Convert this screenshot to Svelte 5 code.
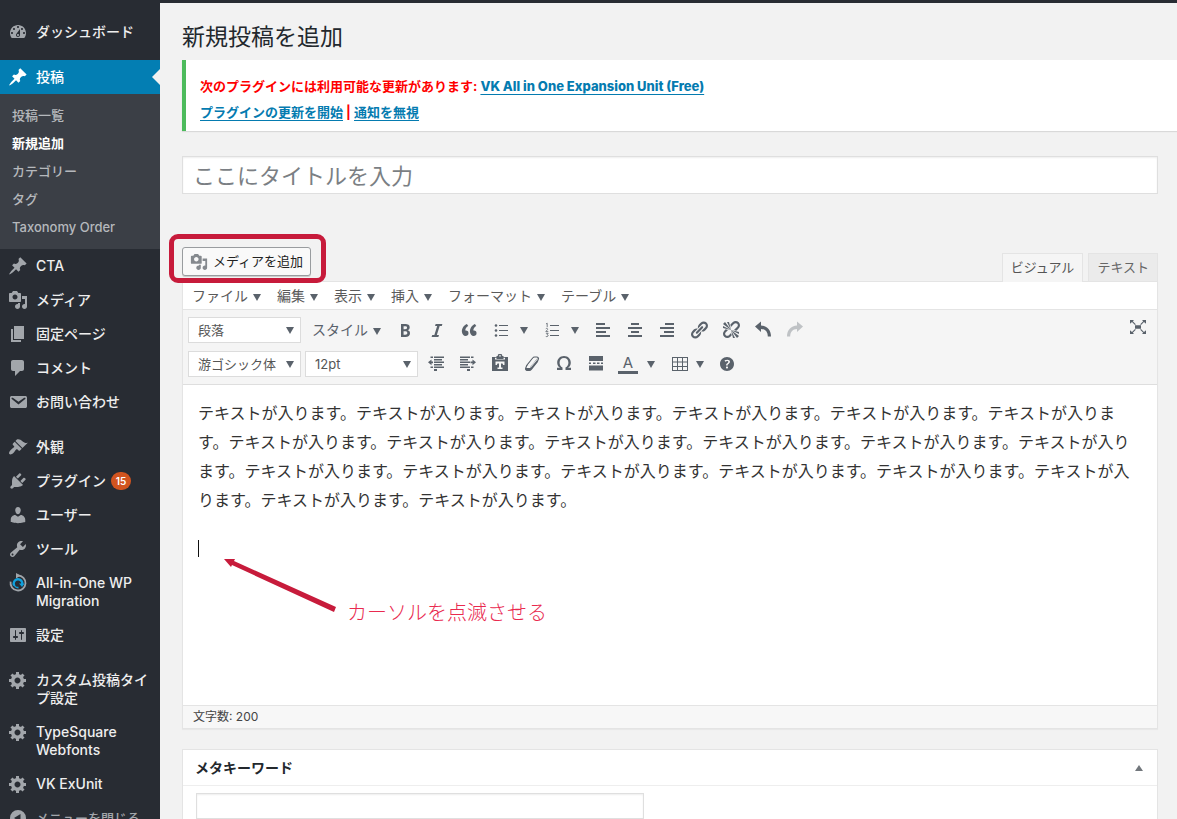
<script>
  const pin = 'M10.44 3.02l1.82-1.82 6.36 6.35-1.83 1.82c-1.05-.68-2.48-.57-3.41.36l-.75.75c-.92.93-1.04 2.35-.35 3.41l-1.83 1.82-2.41-2.41-2.8 2.79c-.42.42-3.38 2.71-3.8 2.29s1.86-3.39 2.28-3.81l2.79-2.79L4.1 9.36l1.83-1.82c1.05.69 2.48.57 3.4-.36l.75-.75c.93-.92 1.05-2.35.36-3.41z';
  const media = 'M13 11V4c0-.55-.45-1-1-1h-1.67L9 1H5L3.67 3H2c-.55 0-1 .45-1 1v7c0 .55.45 1 1 1h10c.55 0 1-.45 1-1zM7 4.5c1.38 0 2.5 1.12 2.5 2.5S8.38 9.5 7 9.5 4.5 8.38 4.5 7 5.62 4.5 7 4.5zM14 6h5v10.5c0 1.38-1.12 2.5-2.5 2.5S14 17.88 14 16.5s1.12-2.5 2.5-2.5c.17 0 .34.02.5.05V9h-3V6zm-4 8.05V13h2v3.5c0 1.38-1.12 2.5-2.5 2.5S7 17.88 7 16.5 8.12 14 9.5 14c.17 0 .34.02.5.05z';
  const gear = 'M18 12h-2.18c-.17.7-.44 1.35-.81 1.93l1.54 1.54-2.1 2.1-1.54-1.54c-.58.36-1.23.63-1.91.79V19H8v-2.18c-.68-.16-1.33-.43-1.91-.79l-1.54 1.54-2.12-2.12 1.54-1.54c-.36-.58-.63-1.23-.79-1.91H1V9.03h2.17c.16-.7.44-1.35.8-1.94L2.43 5.55l2.1-2.1 1.54 1.54c.58-.37 1.24-.64 1.93-.81V2h3v2.18c.68.16 1.33.43 1.91.79l1.54-1.54 2.12 2.12-1.54 1.54c.36.59.64 1.24.8 1.94H18V12zm-8.5 1.5c1.66 0 3-1.34 3-3s-1.34-3-3-3-3 1.34-3 3 1.34 3 3 3z';
  const icons = {
    dashboard: 'M3.76 16h12.48c1.1-1.37 1.76-3.11 1.76-5 0-4.42-3.58-8-8-8s-8 3.58-8 8c0 1.89.66 3.63 1.76 5zM10 4c.55 0 1 .45 1 1s-.45 1-1 1-1-.45-1-1 .45-1 1-1zM6 6c.55 0 1 .45 1 1s-.45 1-1 1-1-.45-1-1 .45-1 1-1zm8 0c.55 0 1 .45 1 1s-.45 1-1 1-1-.45-1-1 .45-1 1-1zm-5.37 5.55L12 7v6c0 1.1-.9 2-2 2s-2-.9-2-2c0-.57.24-1.08.63-1.45zM4 10c.55 0 1 .45 1 1s-.45 1-1 1-1-.45-1-1 .45-1 1-1zm12 0c.55 0 1 .45 1 1s-.45 1-1 1-1-.45-1-1 .45-1 1-1zm-5 3c0-.55-.45-1-1-1s-1 .45-1 1 .45 1 1 1 1-.45 1-1z',
    page: 'M6 15V2h10v13H6zm-1 1h8v2H3V5h2v11z',
    comment: 'M5 2h9c1.1 0 2 .9 2 2v7c0 1.1-.9 2-2 2h-2l-5 5v-5H5c-1.1 0-2-.9-2-2V4c0-1.1.9-2 2-2z',
    mail: 'M3.87 4h13.25C18.37 4 19 4.59 19 5.79v8.42c0 1.19-.63 1.79-1.88 1.79H3.87c-1.25 0-1.88-.6-1.88-1.79V5.79c0-1.2.63-1.79 1.88-1.79zm6.62 8.6l6.74-5.53c.24-.2.43-.66.13-1.07-.29-.41-.82-.42-1.17-.17l-5.7 3.86L4.8 5.83c-.35-.25-.88-.24-1.17.17-.3.41-.11.87.13 1.07z',
    brush: 'M14.48 11.06L7.41 3.99l1.5-1.5c.5-.56 2.3-.47 3.51.32 1.21.8 1.43 1.28 2.91 2.1 1.18.64 2.45 1.26 4.45.85zm-.71.71L6.7 4.7 4.93 6.47c-.39.39-.39 1.02 0 1.41l1.06 1.06c.39.39.39 1.03 0 1.42-.6.6-1.43 1.11-2.21 1.69-.35.26-.7.53-1.01.84C1.43 14.23.4 16.08 1.4 17.07c.99 1 2.84-.03 4.18-1.36.31-.31.58-.66.85-1.02.57-.78 1.08-1.61 1.69-2.21.39-.39 1.02-.39 1.41 0l1.06 1.06c.39.39 1.02.39 1.41 0z',
    plug: 'M13.11 4.36L9.87 7.6 8 5.73l3.24-3.24c.35-.34 1.05-.2 1.56.32.52.51.66 1.21.31 1.55zm-8 1.77l.91-1.12 9.01 9.01-1.19.84c-.71.71-2.63 1.16-3.82 1.16H6.14L4.9 17.26c-.59.59-1.54.59-2.12 0-.59-.58-.59-1.53 0-2.12l1.24-1.24v-3.88c0-1.13.4-3.19 1.09-3.89zm7.26 3.97l3.24-3.24c.34-.35 1.04-.21 1.55.31.52.51.66 1.21.31 1.55l-3.24 3.25z',
    user: 'M10 9.25c-2.27 0-2.73-3.44-2.73-3.44C7 4.02 7.82 2 9.97 2c2.16 0 2.98 2.02 2.71 3.81 0 0-.41 3.44-2.68 3.44zm0 2.57L12.72 10c2.39 0 4.52 2.33 4.52 4.53v2.49s-3.65 1.13-7.24 1.13c-3.65 0-7.24-1.13-7.24-1.13v-2.49c0-2.25 1.94-4.48 4.47-4.48z',
    wrench: 'M16.68 9.77c-1.34 1.34-3.3 1.67-4.95.99l-5.41 6.52c-.99.99-2.59.99-3.58 0s-.99-2.59 0-3.57l6.52-5.42c-.68-1.65-.35-3.61.99-4.95 1.28-1.28 3.12-1.62 4.72-1.06l-2.89 2.89 2.82 2.82 2.86-2.87c.53 1.58.18 3.39-1.08 4.65zM3.81 16.21c.4.39 1.04.39 1.43 0 .4-.4.4-1.04 0-1.43-.39-.4-1.03-.4-1.43 0-.39.39-.39 1.03 0 1.43z',
    sliders: 'M18 16V4c0-.55-.45-1-1-1H3c-.55 0-1 .45-1 1v12c0 .55.45 1 1 1h14c.55 0 1-.45 1-1zM8 11h1c.55 0 1 .45 1 1s-.45 1-1 1H8v1.5c0 .28-.22.5-.5.5s-.5-.22-.5-.5V13H6c-.55 0-1-.45-1-1s.45-1 1-1h1V5.5c0-.28.22-.5.5-.5s.5.22.5.5V11zm5-2h-1c-.55 0-1-.45-1-1s.45-1 1-1h1V5.5c0-.28.22-.5.5-.5s.5.22.5.5V7h1c.55 0 1 .45 1 1s-.45 1-1 1h-1v5.5c0 .28-.22.5-.5.5s-.5-.22-.5-.5V9z',
    bold: 'M6 4v13h4.54c1.37 0 2.46-.33 3.26-1 .8-.66 1.2-1.58 1.2-2.77 0-.84-.17-1.51-.51-2.01s-.9-.85-1.67-1.03v-.09c.57-.1 1.02-.4 1.36-.9s.51-1.13.51-1.91c0-1.14-.39-1.98-1.17-2.5C12.75 4.26 11.5 4 9.78 4H6zm2.57 5.15V6.26h1.36c.73 0 1.27.11 1.61.32.34.22.51.58.51 1.07 0 .54-.16.92-.47 1.15s-.82.35-1.51.35h-1.5zm0 2.19h1.6c1.44 0 2.16.53 2.16 1.61 0 .6-.17 1.05-.51 1.34s-.86.43-1.57.43H8.57v-3.38z',
    italic: 'M14.78 6h-2.13l-2.8 9h2.12l-.62 2H4.6l.62-2h2.14l2.8-9H8.03l.62-2h6.75z',
    quote: 'M9.49 13.22c0-.74-.2-1.38-.61-1.9-.62-.78-1.83-.88-2.53-.72-.29-1.65 1.11-3.75 2.92-4.65L7.88 4c-2.73 1.3-5.42 4.28-4.96 8.05C3.21 14.43 4.59 16 6.54 16c.85 0 1.56-.25 2.12-.75s.83-1.18.83-2.03zm8.05 0c0-.74-.2-1.38-.61-1.9-.63-.78-1.83-.88-2.53-.72-.29-1.65 1.11-3.75 2.92-4.65L15.93 4c-2.73 1.3-5.41 4.28-4.95 8.05.29 2.38 1.66 3.95 3.61 3.95.85 0 1.56-.25 2.12-.75s.83-1.18.83-2.03z',
    left: 'M12 5V3H3v2h9zm5 4V7H3v2h14zm-4 4v-2H3v2h10zm4 4v-2H3v2h14z',
    center: 'M14 5V3H6v2h8zm3 4V7H3v2h14zm-3 4v-2H6v2h8zm3 4v-2H3v2h14z',
    right: 'M17 5V3H8v2h9zm0 4V7H3v2h14zm0 4v-2H7v2h10zm0 4v-2H3v2h14z',
    link: 'M17.74 2.76c1.68 1.69 1.68 4.41 0 6.1l-1.53 1.52c-1.12 1.12-2.7 1.47-4.14 1.09l2.62-2.61.76-.77.76-.76c.84-.84.84-2.2 0-3.04-.84-.85-2.2-.85-3.04 0l-.77.76-3.38 3.38c-.37-1.44-.02-3.02 1.1-4.14l1.52-1.53c1.69-1.68 4.42-1.68 6.1 0zM8.59 13.43l5.34-5.34c.42-.42.42-1.1 0-1.52-.44-.43-1.13-.39-1.53 0l-5.33 5.34c-.42.42-.42 1.1 0 1.52.44.43 1.13.39 1.52 0zm-.76 2.29l4.14-4.15c.38 1.44.03 3.02-1.09 4.14l-1.52 1.53c-1.69 1.68-4.41 1.68-6.1 0-1.68-1.68-1.68-4.42 0-6.1l1.53-1.52c1.12-1.12 2.7-1.47 4.14-1.1l-4.14 4.15c-.85.84-.85 2.2 0 3.05.84.84 2.2.84 3.04 0z',
    unlink: 'M17.74 2.26c1.68 1.69 1.68 4.41 0 6.1l-1.53 1.52c-.32.33-.69.58-1.08.77L13 10l1.69-1.64.76-.77.76-.76c.84-.84.84-2.2 0-3.04-.84-.85-2.2-.85-3.04 0l-.77.76-.76.76L10 7l-.65-2.14c.19-.38.44-.75.77-1.07l1.52-1.53c1.69-1.68 4.42-1.68 6.1 0zM2 4l8 6-6-8zm4-2l4 8-2-8H6zM2 6l8 4-8-2V6zm7.36 7.69L10 13l.74 2.35-1.38 1.39c-1.69 1.68-4.41 1.68-6.1 0-1.68-1.68-1.68-4.42 0-6.1l1.39-1.38L7 10l-.69.64-1.52 1.53c-.85.84-.85 2.2 0 3.04.84.85 2.2.85 3.04 0zM18 16l-8-6 6 8zm-4 2l-4-8 2 8h2zm4-4l-8-4 8 2v2z',
    undo: 'M8 1.500v4c6 .3 10 4.500 10 11h-3.200C14.800 12 12.500 9.200 8 9V12L2 6.500z',
    outdent: 'M4.500 2.500H7V4H4.500zM8 2.500h10v1.500H8zM8 5h8v1.500H8zM8 7.500h10V9H8zM8 10h8v1.500H8zM8 12.500h10V14H8zM4.500 12.500H7V14H4.500zM8 15h3v2H8zM5.500 5.500v2H7v1.700H5.500v2L2 8.300z',
    indent: 'M13 2.500h2.500V4H13zM2 2.500h10v1.500H2zM2 5h8v1.500H2zM2 7.500h10V9H2zM2 10h8v1.500H2zM2 12.500h10V14H2zM13 12.500h2.500V14H13zM9 15h3v2H9zM14.500 5.500v2H12.500v1.700h2v2L18 8.300z',
    paste: 'M2 3h4.500V2h1.200a2.300 2.300 0 0 1 4.600 0h1.200v1H18v14H2V3zm3 .8v1.700h10V3.800h-1.500V5h-7V3.800H5zM9.200 2.500h1.600V1.300H9.200zM5.500 7.500V11h1.300l.7-1.500H9V13.500H7.500V15h5v-1.500H11v-4h1.500l.7 1.500h1.300V7.500h-9z',
    omega: 'M3 16v-2.200h3.200C4.200 12.700 3.200 11 3.200 8.700 3.200 4.900 5.900 2 10 2s6.800 2.900 6.800 6.700c0 2.300-1 4-3 5.100H17V16h-5.500v-2.600c1.900-.8 2.900-2.500 2.900-4.700 0-2.800-1.700-4.800-4.400-4.800S5.600 5.900 5.600 8.700c0 2.200 1 3.900 2.900 4.700V16z',
    more: 'M3 2h14v5H3zM3 8.500h2v1.500H3zM7 8.500h2.500v1.500H7zM11 8.500h2.500v1.500H11zM15 8.500h2v1.500h-2zM3 11.500h14v5H3z',
    table: 'M2 3h16v14H2V3zm1 1v3.500h4V4H3zm5 0v3.500h4V4H8zm5 0v3.500h4V4h-4zM3 8.500V12h4V8.500H3zm5 0V12h4V8.500H8zm5 0V12h4V8.500h-4zM3 13v3h4v-3H3zm5 0v3h4v-3H8zm5 0v3h4v-3h-4z',
    help: 'M17 10c0-3.870-3.140-7-7-7-3.870 0-7 3.130-7 7s3.130 7 7 7c3.860 0 7-3.130 7-7zm-6.300 1.480H9.140v-.43c0-.38.080-.7.240-.98s.46-.57.880-.89c.41-.29.68-.53.810-.71.140-.18.200-.39.200-.62 0-.25-.090-.44-.280-.58-.190-.13-.450-.19-.790-.19-.580 0-1.250.190-2 .570l-.640-1.280c.870-.490 1.800-.740 2.770-.740.810 0 1.450.200 1.920.580.480.390.710.910.710 1.550 0 .430-.090.800-.290 1.110-.190.320-.570.670-1.110 1.060-.380.280-.610.490-.710.630-.1.150-.15.340-.15.570v.35zm-1.470 2.740c-.180-.170-.270-.420-.270-.730 0-.330.080-.580.260-.750s.43-.25.770-.25c.32 0 .57.090.75.260s.27.42.27.74c0 .30-.090.550-.27.720-.18.180-.43.270-.75.270-.33 0-.580-.090-.76-.26z',
    expand: 'M7 5.200h6v3.600H7zM2 0h4L4.800 1.300l3 3-.8.8-3-3L2 3.800zM18 0v3.800L16 2.100l-3 3-.8-.8 3-3L14 0zM2 14v-3.800l2 1.700 3-3 .8.800-3 3L6 14zM18 14h-4l1.200-1.300-3-3 .8-.8 3 3 2-1.700z',
    collapse: 'M10 2a8 8 0 1 0 0 16 8 8 0 0 0 0-16zm2.500 4v8L6 10z',
    pin, media, gear
  };

  const groups = [
    [{ icon: 'dashboard', text: 'ダッシュボード' }],
    [
      { icon: 'pin', text: '投稿', active: true, children: ['投稿一覧', '新規追加', 'カテゴリー', 'タグ', 'Taxonomy Order'] },
      { icon: 'pin', text: 'CTA' },
      { icon: 'media', text: 'メディア' },
      { icon: 'page', text: '固定ページ' },
      { icon: 'comment', text: 'コメント' },
      { icon: 'mail', text: 'お問い合わせ' }
    ],
    [
      { icon: 'brush', text: '外観' },
      { icon: 'plug', text: 'プラグイン', badge: 15 },
      { icon: 'user', text: 'ユーザー' },
      { icon: 'wrench', text: 'ツール' },
      { icon: 'migrate', text: 'All-in-One WP Migration' },
      { icon: 'sliders', text: '設定' }
    ],
    [
      { icon: 'gear', text: 'カスタム投稿タイプ設定' },
      { icon: 'gear', text: 'TypeSquare Webfonts' },
      { icon: 'gear', text: 'VK ExUnit' },
      { icon: 'collapse', text: 'メニューを閉じる', muted: true }
    ]
  ];
  const menus = ['ファイル', '編集', '表示', '挿入', 'フォーマット', 'テーブル'];
  const body = 'テキストが入ります。'.repeat(20);
</script>

{#snippet icon(name, size = 20)}
  <svg class="icon" width={size} height={size} viewBox="0 0 20 20" aria-hidden="true">
    {#if name === 'migrate'}
      <path d="M10 2.500a7.500 7.500 0 1 1-7.400 6.200" fill="none" stroke="#a0a5aa" stroke-width="1.800" />
      <path d="M8 0l4.500 2.600L8 5.500z" fill="#a0a5aa" />
      <path d="M6.200 12.500a4.300 4.300 0 1 1 8-1" fill="none" stroke="#10a0dc" stroke-width="2.400" />
      <path d="M11 10.500h5.500L14 14z" fill="#10a0dc" />
      <path d="M6 11a4.200 4.200 0 0 0 4.500 3.600" fill="none" stroke="#10a0dc" stroke-width="1.600" />
    {:else if name === 'bullets'}
      <path d="M8 5.500h9M8 10.500h9M8 15.500h9" stroke="currentColor" />
      <circle cx="5" cy="5.500" r="1.300" /><circle cx="5" cy="10.500" r="1.300" /><circle cx="5" cy="15.500" r="1.300" />
    {:else if name === 'numbers'}
      <path d="M8 5.500h9M8 10.500h9M8 15.500h9" stroke="currentColor" />
      <path d="M4 4l1.200-.8v4M3.800 8.800c1-.9 2.400-.1 1.700.8l-1.700 2h2.500M3.900 13.300h2.300l-1.200 1.400c1.900 0 1.500 2.500-1.200 1.800" fill="none" stroke="currentColor" stroke-width=".8" />
    {:else if name === 'eraser'}
      <path d="M12.500 3h2.200c1.400 0 2.200 1.200 1.600 2.300l-1 2.500-6 7.500c-.6.700-1.200 1-2 1H5.200c-1.200 0-1.900-1.200-1.400-2.200l.9-2.600 6-7.500c.5-.7 1-1 1.800-1z" fill="none" stroke="currentColor" stroke-width="1.200" />
      <path d="M4.700 11.500h4.500l6.300-7.300M9.200 11.500l-1.200 3.800" fill="none" stroke="currentColor" stroke-width=".5" />
      <path d="M3.400 14h5.100l6.800-8.300.2 2.300-6 7.300c-.6.700-1.200 1.200-2 1.200H5c-1.300 0-2-1.300-1.600-2.500z" />
      <path d="M5.300 12.200h3.200l6-7.200c.3-.5 0-1-.6-1h-1.700c-.4 0-.7.100-.9.400z" fill="#f5f5f5" />
    {:else}
      <path fill-rule="evenodd" d={icons[name]} />
    {/if}
  </svg>
{/snippet}

{#snippet caret()}
  <svg class="caret" width="8" height="7" viewBox="0 0 8 7" aria-hidden="true"><path d="M0 0h8L4 7z" /></svg>
{/snippet}

{#snippet tool(name, label)}
  <button class="tool" aria-label={label}>{@render icon(name)}</button>
{/snippet}

<div class="page">
  <nav class="side">
    {#each groups as group}
      <ul class="group">
        {#each group as item}
          <li>
            <a href="#menu" class="item" class:active={item.active} class:muted={item.muted}>
              {@render icon(item.icon)}
              <span class="name">{item.text}{#if item.badge}<span class="badge">{item.badge}</span>{/if}</span>
            </a>
            {#if item.children}
              <ul class="sub">
                {#each item.children as child, i}
                  <li><a href="#sub" class:current={i === 1}>{child}</a></li>
                {/each}
              </ul>
            {/if}
          </li>
        {/each}
      </ul>
    {/each}
  </nav>

  <main>
    <h1>新規投稿を追加</h1>
    <div class="notice">
      <p>次のプラグインには利用可能な更新があります: <a class="plugin" href="#plugin">VK All in One Expansion Unit (Free)</a></p>
      <p><a href="#update">プラグインの更新を開始</a> | <a href="#dismiss">通知を無視</a></p>
    </div>

    <div class="column">
      <input class="title" type="text" aria-label="タイトル" placeholder="ここにタイトルを入力" />

      <div class="tabs-row">
        <div class="media-wrap">
          <button class="media">{@render icon('media', 18)}メディアを追加</button>
          <span class="frame"></span>
        </div>
        <div class="tabs">
          <button class="tab on">ビジュアル</button>
          <button class="tab">テキスト</button>
        </div>
      </div>

      <section class="editor">
        <div class="menubar">
          {#each menus as m}
            <button>{m}{@render caret()}</button>
          {/each}
        </div>
        <div class="toolbar">
          <div class="row">
            <span class="pick">
              <select aria-label="段落"><option>段落</option></select>{@render caret()}
            </span>
            <button class="styles">スタイル{@render caret()}</button>
            {@render tool('bold', '太字')}
            {@render tool('italic', 'イタリック')}
            {@render tool('quote', '引用')}
            <div class="split">{@render tool('bullets', '番号なしリスト')}<button class="drop" aria-label="リストの種類">{@render caret()}</button></div>
            <div class="split">{@render tool('numbers', '番号付きリスト')}<button class="drop" aria-label="番号の種類">{@render caret()}</button></div>
            {@render tool('left', '左寄せ')}
            {@render tool('center', '中央揃え')}
            {@render tool('right', '右寄せ')}
            {@render tool('link', 'リンクの挿入')}
            {@render tool('unlink', 'リンクの削除')}
            {@render tool('undo', '取り消し')}
            <button class="tool redo" aria-label="やり直し" disabled>{@render icon('undo')}</button>
            <span class="grow"></span>
            {@render tool('expand', '集中執筆モード')}
          </div>
          <div class="row">
            <span class="pick">
              <select aria-label="フォント"><option>游ゴシック体</option></select>{@render caret()}
            </span>
            <span class="pick second">
              <select aria-label="フォントサイズ"><option>12pt</option></select>{@render caret()}
            </span>
            {@render tool('outdent', 'インデントを減らす')}
            {@render tool('indent', 'インデントを増やす')}
            {@render tool('paste', 'テキストとしてペースト')}
            {@render tool('eraser', '書式設定をクリア')}
            {@render tool('omega', '特殊文字')}
            {@render tool('more', '続きを読む')}
            <div class="split"><button class="tool"><span class="letter">A</span></button><button class="drop" aria-label="文字色">{@render caret()}</button></div>
            <button class="tool table" aria-label="テーブル">{@render icon('table')}{@render caret()}</button>
            {@render tool('help', 'ヘルプ')}
          </div>
        </div>
        <div class="canvas">
          <p>{body}</p>
          <p><span class="cursor"></span></p>
          <svg class="arrow" width="120" height="60" viewBox="0 0 120 60" aria-hidden="true">
            <path d="M4 4h11l-1 2L116 52l-2 5L12 10l-1 2z" />
          </svg>
          <span class="note">カーソルを点滅させる</span>
        </div>
        <div class="status">文字数: 200</div>
      </section>

      <section class="meta">
        <header>
          <h2>メタキーワード</h2>
          <button aria-label="パネルを閉じる"><svg width="8" height="6" viewBox="0 0 8 6"><path d="M4 0l4 6H0z" /></svg></button>
        </header>
        <div class="inside"><input type="text" aria-label="メタキーワード" /></div>
      </section>
    </div>
  </main>
</div>

<style>
  :global(body) {
    background: #f2f2f2;
  }
  .page,
  .page button,
  .page input,
  .page select {
    font-family: Inter, "Noto Sans CJK JP", sans-serif;
    font-size: 13px;
  }
  .page {
    display: flex;
    box-sizing: border-box;
    height: 100vh;
    overflow: hidden;
    border-top: 3px solid #282c33;
    background: #f2f2f2;
    color: #444;
  }
  .page :is(ul, p, h1, h2) {
    margin: 0;
    padding: 0;
    list-style: none;
  }
  button {
    display: flex;
    align-items: center;
    padding: 0;
    border: 0;
    background: none;
    color: inherit;
  }
  svg {
    display: block;
    flex: none;
    fill: currentColor;
  }

  .side {
    flex: none;
    width: 160px;
    padding-top: 12px;
    background: #282c33;
  }
  .group {
    padding-bottom: 11px !important;
  }
  .item {
    position: relative;
    display: flex;
    gap: 8px;
    padding: 8px 6px 8px 8px;
    color: #eee;
    font-size: 14px;
    font-weight: 500;
    line-height: 18px;
    text-decoration: none;
  }
  .item .icon {
    margin: -1px 0;
    color: #a2a6ab;
  }
  .item.muted {
    color: #a2a6ab;
    font-size: 13px;
  }
  .item.active {
    background: #037eb3;
    color: #fff;
  }
  .item.active .icon {
    color: #fff;
  }
  .item.active::after {
    content: "";
    position: absolute;
    right: 0;
    top: 9px;
    border: 8px solid transparent;
    border-right-color: #f2f2f2;
    border-left: 0;
  }
  .badge {
    display: inline-block;
    margin-left: 5px;
    padding: 0 4px;
    border-radius: 9px;
    background: #d2541f;
    color: #fff;
    font-size: 10px;
    font-weight: 600;
    min-width: 12px;
    line-height: 18px;
    text-align: center;
    vertical-align: top;
  }
  .sub {
    padding: 7px 0 8px !important;
    background: #3b3f46;
  }
  .sub a {
    display: block;
    padding: 0 12px;
    color: #b5b8bc;
    font-weight: 500;
    line-height: 28px;
    text-decoration: none;
  }
  .sub a.current {
    color: #fff;
    font-weight: 700;
  }

  main {
    flex: 1;
    min-width: 0;
    padding-left: 22px;
  }
  h1 {
    padding: 18px 0 7px !important;
    color: #23282d;
    font-size: 23px;
    font-weight: 400;
    line-height: 32px;
  }
  .notice {
    padding: 13px 14px 6px;
    border-left: 4px solid #4dbb5c;
    background: #fff;
    box-shadow: 0 1px 1px rgba(0, 0, 0, 0.1);
    color: #f00;
    font-weight: 700;
    line-height: 26px;
  }
  .notice a {
    color: #047bb0;
    text-decoration: underline;
    text-underline-offset: 3px;
  }
  .notice .plugin {
    font-weight: 800;
  }
  .column {
    padding: 25px 19px 0 0;
  }
  .title {
    display: block;
    box-sizing: border-box;
    width: 100%;
    height: 38px;
    padding: 2px 10px 0;
    border: 1px solid #dfdfdf;
    background: #fff;
    box-shadow: inset 0 1px 2px rgba(0, 0, 0, 0.07);
  }
  .page .title {
    font-size: 22px;
  }
  .title::placeholder {
    color: #7b7f84;
    opacity: 1;
  }
  .tabs-row {
    display: flex;
    justify-content: space-between;
    align-items: flex-end;
    padding-top: 53px;
  }
  .media-wrap {
    position: relative;
    padding-bottom: 5px;
  }
  .media {
    gap: 5px;
    height: 29px;
    padding: 0 7px 2px;
    border: 1px solid #999c9f;
    border-radius: 3px;
    background: #f9f9f9;
    box-shadow: 0 1px 0 #ccc;
    color: #222;
  }
  .media .icon {
    margin-top: 2px;
    color: #85898e;
  }
  .frame {
    position: absolute;
    inset: -13px -15px -2px -13px;
    border: 5px solid #c71b3b;
    border-radius: 9px;
    z-index: 2;
  }
  .tabs {
    display: flex;
    gap: 5px;
  }
  .tab {
    height: 28px;
    padding: 0 8px 3px;
    border: 1px solid #e4e4e4;
    border-bottom: 0;
    background: #ebebeb;
    color: #666;
  }
  .tab.on {
    position: relative;
    z-index: 1;
    height: 29px;
    margin-bottom: -1px;
    background: #f5f5f5;
    color: #555;
  }

  .editor {
    border: 1px solid #e4e4e4;
    background: #fff;
    box-shadow: 0 1px 1px rgba(0, 0, 0, 0.04);
  }
  .menubar {
    display: flex;
    gap: 16px;
    height: 27px;
    padding-left: 9px;
    border-bottom: 1px solid #e4e4e4;
    color: #5a5a5a;
  }
  .menubar button,
  .toolbar .styles {
    gap: 5px;
    padding-bottom: 2px;
    font-size: 14px;
  }
  .caret {
    color: #5a626b;
  }
  .menubar .caret,
  .styles .caret {
    margin-top: 5px;
  }
  .toolbar {
    display: flex;
    flex-direction: column;
    gap: 8px;
    padding: 7px 3px 7px 5px;
    border-bottom: 1px solid #dedede;
    background: #f5f5f5;
    color: #5a626b;
  }
  .row {
    display: flex;
    height: 26px;
  }
  .pick {
    display: grid;
    align-items: center;
    width: 113px;
  }
  .pick.second {
    margin: 0 2px 0 4px;
  }
  .pick > :global(*) {
    grid-area: 1 / 1;
  }
  .pick .caret {
    justify-self: end;
    margin-right: 7px;
    pointer-events: none;
  }
  select {
    box-sizing: border-box;
    width: 100%;
    height: 26px;
    padding: 0 20px 0 9px;
    border: 1px solid #dcdcdc;
    border-radius: 0;
    appearance: none;
    background: #fff;
    color: #555;
  }
  .styles {
    width: 88px;
    padding-left: 11px;
    box-sizing: border-box;
  }
  .tool {
    justify-content: center;
    width: 32px;
  }
  .split {
    display: flex;
    width: 51px;
  }
  .drop {
    justify-content: center;
    width: 14px;
  }
  .table {
    gap: 6px;
    width: 48px;
  }
  .redo {
    color: #bfc2c5;
  }
  .redo .icon {
    transform: scaleX(-1);
  }
  .grow {
    flex: 1;
  }
  .letter {
    width: 20px;
    border-bottom: 3px solid #5a626b;
    font-size: 15px;
    line-height: 16px;
    text-align: center;
  }
  .canvas {
    position: relative;
    box-sizing: border-box;
    min-height: 320px;
    padding: 14px 12px 0 15px;
    color: #333;
    font-size: 16px;
    line-height: 29px;
  }
  .canvas p {
    margin-bottom: 18px;
  }
  .cursor {
    display: inline-block;
    width: 1px;
    height: 17px;
    background: #111;
    vertical-align: middle;
  }
  .arrow {
    position: absolute;
    left: 37px;
    top: 170px;
    fill: #c71b3b;
  }
  .note {
    position: absolute;
    left: 164px;
    top: 214px;
    color: #e92a4f;
    font-size: 20px;
    font-weight: 300;
  }
  .status {
    padding: 0 10px;
    border-top: 1px solid #e4e4e4;
    background: #f7f7f7;
    font-size: 12px;
    line-height: 22px;
  }

  .meta {
    margin-top: 20px;
    border: 1px solid #e4e4e4;
    background: #fff;
  }
  .meta header {
    display: flex;
    justify-content: space-between;
    align-items: center;
    height: 35px;
    padding: 0 14px 0 12px;
    border-bottom: 1px solid #eee;
    color: #72777c;
  }
  .meta h2 {
    padding-bottom: 2px;
    color: #23282d;
    font-size: 14px;
  }
  .inside {
    padding: 7px 13px 12px;
  }
  .inside input {
    box-sizing: border-box;
    width: 448px;
    max-width: 100%;
    height: 26px;
    border: 1px solid #dfdfdf;
    box-shadow: inset 0 1px 2px rgba(0, 0, 0, 0.07);
  }
</style>
